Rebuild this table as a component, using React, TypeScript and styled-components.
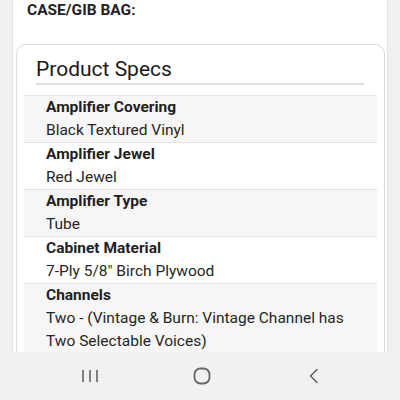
import React from "react";
import styled, { createGlobalStyle } from "styled-components";

const Global = createGlobalStyle`
  html, body { margin: 0; padding: 0; background: #f0f0f0; }
  body { font-family: Roboto, "Noto Sans", "Liberation Sans", sans-serif; color: #222; }
`;

const Screen = styled.div`
  width: 400px;
  height: 400px;
  display: flex;
  flex-direction: column;
  overflow: hidden;
  background: #f0f0f0;
`;

const Content = styled.div`
  flex: 1;
  overflow: hidden;
  padding: 0 12px;
`;

const Panel = styled.div`
  background: #fff;
  border-left: 1px solid #e2e2e2;
  border-right: 1px solid #e2e2e2;
  min-height: 100%;
  padding: 0 2px 0 3px;
`;

const CaseLabel = styled.div`
  font-size: 15.5px;
  line-height: 20px;
  font-weight: 700;
  padding-left: 11px;
  text-transform: uppercase;
  color: #222;
`;

const Card = styled.section`
  margin-top: 24px;
  border: 1px solid #dcdcdc;
  border-bottom: none;
  border-radius: 10px 10px 0 0;
  padding: 10px 7px 0 7px;
`;

const Title = styled.h2`
  margin: 0 13px 10px 12px;
  font-size: 21px;
  line-height: 28px;
  font-weight: 400;
  color: #1a1a1a;
  border-bottom: 2px solid #e0e0e0;
`;

const Row = styled.div<{ $alt: boolean }>`
  border-top: 1px solid #e4e4e4;
  background: ${(p) => (p.$alt ? "#f6f6f6" : "#ffffff")};
  padding: 0 22px;
  font-size: 15.5px;
  line-height: 23px;
`;

const Label = styled.div`
  font-weight: 700;
  color: #1f1f1f;
`;

const Value = styled.div`
  color: #262626;
`;

const NavBar = styled.nav`
  height: 48px;
  flex: none;
  background: #f1f1f1;
  display: grid;
  grid-template-columns: repeat(3, 112px);
  justify-content: center;
  align-items: center;
  padding-left: 4px;
  box-sizing: border-box;
`;

const NavButton = styled.div`
  display: flex;
  justify-content: center;
  align-items: center;
  height: 100%;
`;

const specs: { label: string; value: string }[] = [
  { label: "Amplifier Covering", value: "Black Textured Vinyl" },
  { label: "Amplifier Jewel", value: "Red Jewel" },
  { label: "Amplifier Type", value: "Tube" },
  { label: "Cabinet Material", value: '7-Ply 5/8" Birch Plywood' },
  {
    label: "Channels",
    value: "Two - (Vintage & Burn: Vintage Channel has Two Selectable Voices)",
  },
];

export default function App() {
  return (
    <>
      <Global />
      <Screen>
        <Content>
          <Panel>
            <CaseLabel>CASE/GIB BAG:</CaseLabel>
            <Card>
              <Title>Product Specs</Title>
              {specs.map((s, i) => (
                <Row key={s.label} $alt={i % 2 === 0}>
                  <Label>{s.label}</Label>
                  <Value>{s.value}</Value>
                </Row>
              ))}
            </Card>
          </Panel>
        </Content>
        <NavBar>
          <NavButton>
            <svg width="18" height="14" viewBox="0 0 18 14">
              <g stroke="#666" strokeWidth="1.6" strokeLinecap="round">
                <line x1="2" y1="1.5" x2="2" y2="12.5" />
                <line x1="9" y1="1.5" x2="9" y2="12.5" />
                <line x1="16" y1="1.5" x2="16" y2="12.5" />
              </g>
            </svg>
          </NavButton>
          <NavButton>
            <svg width="18" height="18" viewBox="0 0 18 18">
              <rect x="1.5" y="1.5" width="15" height="15" rx="6" fill="none" stroke="#666" strokeWidth="1.8" />
            </svg>
          </NavButton>
          <NavButton>
            <svg width="14" height="16" viewBox="0 0 14 16">
              <polyline points="10,1.5 3.5,8 10,14.5" fill="none" stroke="#666" strokeWidth="1.6" strokeLinecap="round" strokeLinejoin="round" />
            </svg>
          </NavButton>
        </NavBar>
      </Screen>
    </>
  );
}
